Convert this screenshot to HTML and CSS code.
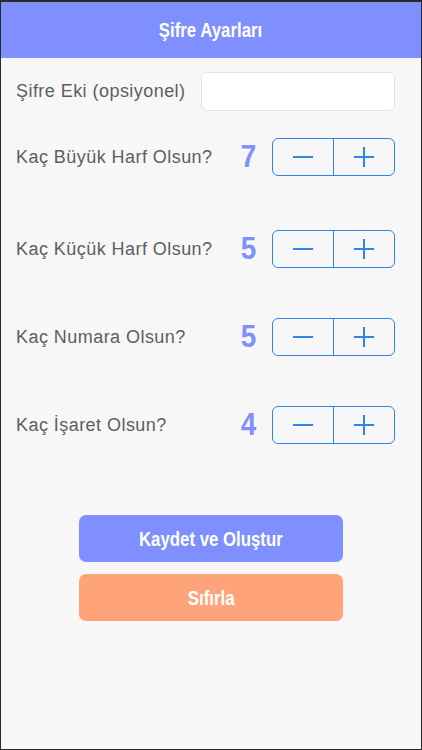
FILE: index.html
```html
<!DOCTYPE html>
<html lang="tr">
<head>
    <meta charset="UTF-8">
    <meta name="viewport" content="width=device-width, initial-scale=1.0">
    <title>Şifre Ayarları</title>
    <link rel="stylesheet" href="styles.css">
</head>
<body>
    <div class="screen">
        <header class="nav-bar"><span class="narrow">Şifre Ayarları</span></header>

        <div class="settings">
            <div class="field-row">
                <label class="label" for="suffix">Şifre Eki (opsiyonel)</label>
                <input class="text-input" id="suffix" type="text">
            </div>

            <div class="count-row first">
                <span class="label">Kaç Büyük Harf Olsun?</span>
                <span class="count narrow">7</span>
                <div class="stepper">
                    <button class="step minus"><span></span></button>
                    <button class="step plus"><span></span></button>
                </div>
            </div>

            <div class="count-row second">
                <span class="label">Kaç Küçük Harf Olsun?</span>
                <span class="count narrow">5</span>
                <div class="stepper">
                    <button class="step minus"><span></span></button>
                    <button class="step plus"><span></span></button>
                </div>
            </div>

            <div class="count-row">
                <span class="label">Kaç Numara Olsun?</span>
                <span class="count narrow">5</span>
                <div class="stepper">
                    <button class="step minus"><span></span></button>
                    <button class="step plus"><span></span></button>
                </div>
            </div>

            <div class="count-row">
                <span class="label">Kaç İşaret Olsun?</span>
                <span class="count narrow">4</span>
                <div class="stepper">
                    <button class="step minus"><span></span></button>
                    <button class="step plus"><span></span></button>
                </div>
            </div>
        </div>

        <div class="actions">
            <button class="action-btn save"><span class="narrow">Kaydet ve Oluştur</span></button>
            <button class="action-btn reset"><span class="narrow">Sıfırla</span></button>
        </div>
    </div>
</body>
</html>
```

FILE: styles.css
```css
body {
    margin: 0;
    padding: 0;
    background: #1c1c1c;
    font-family: 'Liberation Sans', Arial, sans-serif;
}

.screen {
    box-sizing: border-box;
    width: 422px;
    height: 750px;
    background: #f7f7f7;
    border: 1px solid #2a2a2a;
    border-top-width: 2px;
    overflow: hidden;
}

/* no condensed face installed, so squeeze the bold one */
.narrow {
    display: inline-block;
    font-family: 'Liberation Sans', Arial, sans-serif;
    font-weight: bold;
    transform: scaleX(0.8);
}

.nav-bar {
    height: 56px;
    background: #7f8ffe;
    color: white;
    display: flex;
    align-items: center;
    justify-content: center;
    font-size: 20px;
}

.nav-bar .narrow {
    transform: scaleX(0.84);
}

.settings {
    padding: 14px 26px 0 15px;
}

.field-row {
    display: flex;
    align-items: center;
    justify-content: space-between;
    height: 39px;
}

.label {
    font-size: 18px;
    letter-spacing: 0.45px;
    color: #5e5e5e;
}

.text-input {
    box-sizing: border-box;
    width: 194px;
    height: 39px;
    border: 1px solid #e4e4e4;
    border-radius: 6px;
    background: white;
    outline: none;
}

.count-row {
    display: flex;
    align-items: center;
    height: 38px;
    margin-top: 50px;
}

.count-row.first {
    margin-top: 27px;
}

.count-row.second {
    margin-top: 54px;
}

.count-row .label {
    flex: 1;
}

.count {
    font-size: 31px;
    color: #7f8ffe;
    margin-right: 16px;
    transform: scaleX(0.9);
    transform-origin: right center;
}

.stepper {
    box-sizing: border-box;
    display: flex;
    width: 123px;
    height: 38px;
    border: 1.5px solid #2f84ea;
    border-radius: 6px;
}

.step {
    flex: 1;
    position: relative;
    border: 0;
    padding: 0;
    background: transparent;
}

.step + .step {
    border-left: 1.5px solid #2f84ea;
}

.step span,
.plus span::after {
    position: absolute;
    left: 50%;
    top: 50%;
    width: 20px;
    height: 2px;
    margin: -1px 0 0 -10px;
    background: #2f84ea;
}

.plus span::after {
    content: '';
    transform: rotate(90deg);
    margin: 0;
    left: 0;
    top: 0;
}

.actions {
    display: flex;
    flex-direction: column;
    align-items: center;
    gap: 12px;
    margin-top: 71px;
}

.action-btn {
    width: 264px;
    height: 47px;
    border: 0;
    border-radius: 7px;
    color: white;
    font-size: 21px;
}

.save {
    background: #7f8ffe;
}

.reset {
    background: #ffa47a;
}
```
